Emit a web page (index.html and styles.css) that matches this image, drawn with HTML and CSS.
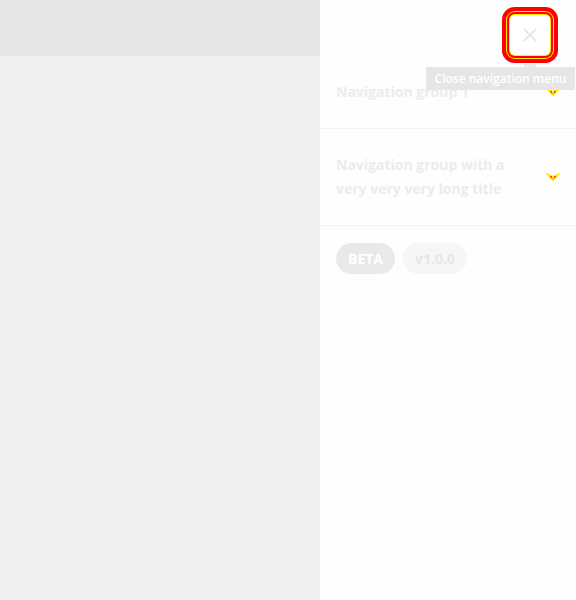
FILE: index.html
```html
<!DOCTYPE html>
<html>
<head>
<meta charset="utf-8">
<link rel="stylesheet" href="styles.css">
</head>
<body>
<div class="app">
  <main class="main">
    <div class="topbar"></div>
    <div class="content"></div>
  </main>
  <aside class="drawer">
    <div class="drawer-head">
      <button class="close" aria-label="Close navigation menu">
        <svg width="18" height="18" viewBox="0 0 18 18"><path d="M3 3L15 15M15 3L3 15" stroke="#e6e6e6" stroke-width="1.8" fill="none"/></svg>
      </button>
      <div class="tooltip">Close navigation menu</div>
    </div>
    <div class="group">
      <span class="group-title">Navigation group 1</span>
      <svg class="chev" width="16" height="10" viewBox="0 0 16 10"><path d="M1.5 1.5L8 4.5L14.5 1.5L8 8.5Z" fill="#ff0000" stroke="#ffee00" stroke-width="1.2" stroke-linejoin="round"/><rect x="7.2" y="4.6" width="1.6" height="2" fill="#fff"/></svg>
    </div>
    <div class="group">
      <span class="group-title">Navigation group with a very very very long title</span>
      <svg class="chev" width="16" height="10" viewBox="0 0 16 10"><path d="M1.5 1.5L8 4.5L14.5 1.5L8 8.5Z" fill="#ff0000" stroke="#ffee00" stroke-width="1.2" stroke-linejoin="round"/><rect x="7.2" y="4.6" width="1.6" height="2" fill="#fff"/></svg>
    </div>
    <div class="badges">
      <span class="badge beta">BETA</span>
      <span class="badge ver">v1.0.0</span>
    </div>
  </aside>
</div>
</body>
</html>
```
FILE: styles.css
```css
html, body { margin: 0; padding: 0; }
body { font-family: "Open Sans", "DejaVu Sans", sans-serif; width: 576px; height: 600px; overflow: hidden; }
.app { display: flex; height: 600px; }
.main { width: 320px; display: flex; flex-direction: column; background: #efefef; }
.topbar { height: 56px; background: #e6e6e6; }
.content { flex: 1; }
.drawer { width: 256px; background: #fefefe; position: relative; display: flex; flex-direction: column; }
.drawer-head { height: 56px; display: flex; justify-content: flex-end; align-items: flex-start; padding: 15px 26px 0 0; box-sizing: border-box; }
.close {
  width: 40px; height: 40px; border: 0; background: #fff; border-radius: 5px; padding: 0;
  display: flex; align-items: center; justify-content: center;
  box-shadow: 0 0 0 1px #ffee00, 0 0 0 3px #ff0000, 0 0 0 4px #ffee00, 0 0 0 8px #ff0000;
  position: relative; z-index: 1;
}
.tooltip {
  position: absolute; left: 106px; top: 67px; width: 149px; height: 23px;
  background: #e6e6e6; color: #fff; font-size: 12px; font-weight: 600;
  display: flex; align-items: center; justify-content: center; z-index: 2;
}
.tooltip::before {
  content: ""; position: absolute; top: -3px; left: 98px; width: 12px; height: 3px; background: #ececec;
}
.group {
  display: flex; align-items: center; justify-content: space-between;
  padding: 24px 15px 24px 16px; border-bottom: 1px solid #f3f3f3;
}
.group-title { font-size: 14px; font-weight: 700; color: #ececec; line-height: 24px; width: 190px; }
.chev { flex: none; }
.badges { display: flex; gap: 8px; padding: 17px 16px; }
.badge { height: 31px; border-radius: 16px; font-size: 14px; font-weight: 700; display: flex; align-items: center; padding: 0 12px; }
.beta { background: #e9e9e9; color: #fff; }
.ver { background: #f6f6f6; color: #e6e6e6; }
```
